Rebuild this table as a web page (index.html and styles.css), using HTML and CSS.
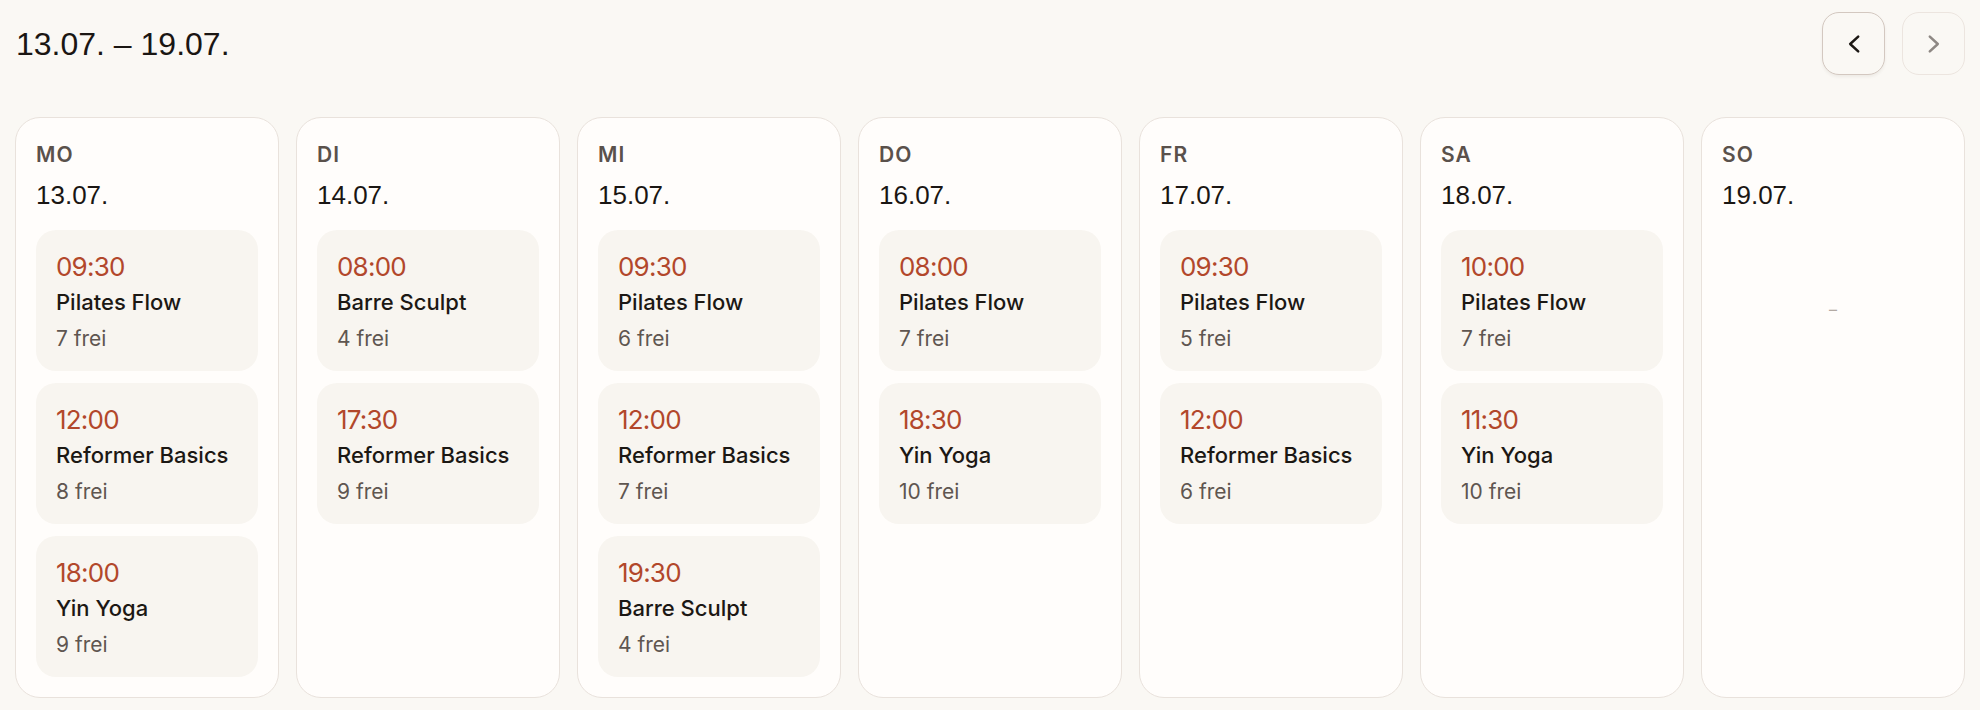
FILE: index.html
```html
<!DOCTYPE html>
<html lang="de">
<head>
<meta charset="utf-8">
<title>Wochenplan</title>
<link rel="stylesheet" href="styles.css">
</head>
<body>
<div class="page">
  <header class="header">
    <h1 class="range">13.07. – 19.07.</h1>
    <div class="nav">
      <button class="nav-btn nav-btn--active" aria-label="Vorherige Woche">
        <svg width="14" height="20" viewBox="0 0 14 20"><path d="M11.2 2.6 L3.2 10 L11.2 17.4" fill="none" stroke="currentColor" stroke-width="2.5" stroke-linecap="round" stroke-linejoin="round"/></svg>
      </button>
      <button class="nav-btn nav-btn--muted" aria-label="Nächste Woche">
        <svg width="14" height="20" viewBox="0 0 14 20"><path d="M2.8 2.6 L10.8 10 L2.8 17.4" fill="none" stroke="currentColor" stroke-width="2.5" stroke-linecap="round" stroke-linejoin="round"/></svg>
      </button>
    </div>
  </header>

  <main class="week">
    <section class="day">
      <div class="day-name">MO</div>
      <div class="day-date">13.07.</div>
      <div class="slots">
        <div class="slot"><div class="time">09:30</div><div class="name">Pilates Flow</div><div class="free">7 frei</div></div>
        <div class="slot"><div class="time">12:00</div><div class="name">Reformer Basics</div><div class="free">8 frei</div></div>
        <div class="slot"><div class="time">18:00</div><div class="name">Yin Yoga</div><div class="free">9 frei</div></div>
      </div>
    </section>
    <section class="day">
      <div class="day-name">DI</div>
      <div class="day-date">14.07.</div>
      <div class="slots">
        <div class="slot"><div class="time">08:00</div><div class="name">Barre Sculpt</div><div class="free">4 frei</div></div>
        <div class="slot"><div class="time">17:30</div><div class="name">Reformer Basics</div><div class="free">9 frei</div></div>
      </div>
    </section>
    <section class="day">
      <div class="day-name">MI</div>
      <div class="day-date">15.07.</div>
      <div class="slots">
        <div class="slot"><div class="time">09:30</div><div class="name">Pilates Flow</div><div class="free">6 frei</div></div>
        <div class="slot"><div class="time">12:00</div><div class="name">Reformer Basics</div><div class="free">7 frei</div></div>
        <div class="slot"><div class="time">19:30</div><div class="name">Barre Sculpt</div><div class="free">4 frei</div></div>
      </div>
    </section>
    <section class="day">
      <div class="day-name">DO</div>
      <div class="day-date">16.07.</div>
      <div class="slots">
        <div class="slot"><div class="time">08:00</div><div class="name">Pilates Flow</div><div class="free">7 frei</div></div>
        <div class="slot"><div class="time">18:30</div><div class="name">Yin Yoga</div><div class="free">10 frei</div></div>
      </div>
    </section>
    <section class="day">
      <div class="day-name">FR</div>
      <div class="day-date">17.07.</div>
      <div class="slots">
        <div class="slot"><div class="time">09:30</div><div class="name">Pilates Flow</div><div class="free">5 frei</div></div>
        <div class="slot"><div class="time">12:00</div><div class="name">Reformer Basics</div><div class="free">6 frei</div></div>
      </div>
    </section>
    <section class="day">
      <div class="day-name">SA</div>
      <div class="day-date">18.07.</div>
      <div class="slots">
        <div class="slot"><div class="time">10:00</div><div class="name">Pilates Flow</div><div class="free">7 frei</div></div>
        <div class="slot"><div class="time">11:30</div><div class="name">Yin Yoga</div><div class="free">10 frei</div></div>
      </div>
    </section>
    <section class="day">
      <div class="day-name">SO</div>
      <div class="day-date">19.07.</div>
      <div class="empty">–</div>
    </section>
  </main>
</div>
</body>
</html>
```

FILE: styles.css
```css
* { box-sizing: border-box; }

html, body {
  margin: 0;
  padding: 0;
  background: #faf8f4;
}

body {
  font-family: Inter, "Noto Sans", sans-serif;
  color: #1c1814;
}

.page {
  padding: 12px 15px 11px;
}

.header {
  display: flex;
  align-items: center;
  justify-content: space-between;
  height: 63px;
  margin-bottom: 42px;
}

.range {
  margin: 0 0 0 1px;
  padding-top: 1px;
  font-family: "Liberation Sans", Arial, sans-serif;
  font-weight: 400;
  font-size: 32px;
  line-height: 40px;
  color: #1a1613;
}

.nav {
  display: flex;
  gap: 17px;
}

.nav-btn {
  width: 63px;
  height: 63px;
  border-radius: 17px;
  background: #faf8f4;
  display: flex;
  align-items: center;
  justify-content: center;
  padding: 0;
  cursor: pointer;
}

.nav-btn--active {
  border: 1.5px solid #d3c8c0;
  color: #1c1814;
  box-shadow: 0 2px 3px rgba(90, 70, 50, 0.07);
}

.nav-btn--muted {
  border: 1.5px solid #ece5df;
  color: #8e8884;
}

.week {
  display: grid;
  grid-template-columns: repeat(7, 1fr);
  gap: 17px;
}

.day {
  background: #fffdfb;
  border: 1.5px solid #e9e2dc;
  border-radius: 25px;
  padding: 24px 20px 20px;
}

.day-name {
  font-size: 21px;
  line-height: 26px;
  font-weight: 600;
  letter-spacing: 0.05em;
  color: #5a514b;
}

.day-date {
  margin-top: 11px;
  font-family: "Liberation Sans", Arial, sans-serif;
  font-size: 26px;
  line-height: 32px;
  color: #1a1613;
}

.slots {
  margin-top: 19px;
  display: flex;
  flex-direction: column;
  gap: 12px;
}

.slot {
  background: #f8f5f0;
  border-radius: 20px;
  padding: 21px 20px 19px;
}

.time {
  font-size: 26px;
  line-height: 32px;
  font-weight: 400;
  letter-spacing: -0.03em;
  color: #b2472b;
}

.name {
  margin-top: 5px;
  font-size: 22px;
  line-height: 28px;
  font-weight: 500;
  color: #1c1814;
}

.free {
  margin-top: 10px;
  font-size: 21px;
  line-height: 26px;
  color: #5f5650;
}

.empty {
  padding: 86px 0 0;
  text-align: center;
  font-size: 16px;
  line-height: 24px;
  color: #b3aaa3;
}
```
